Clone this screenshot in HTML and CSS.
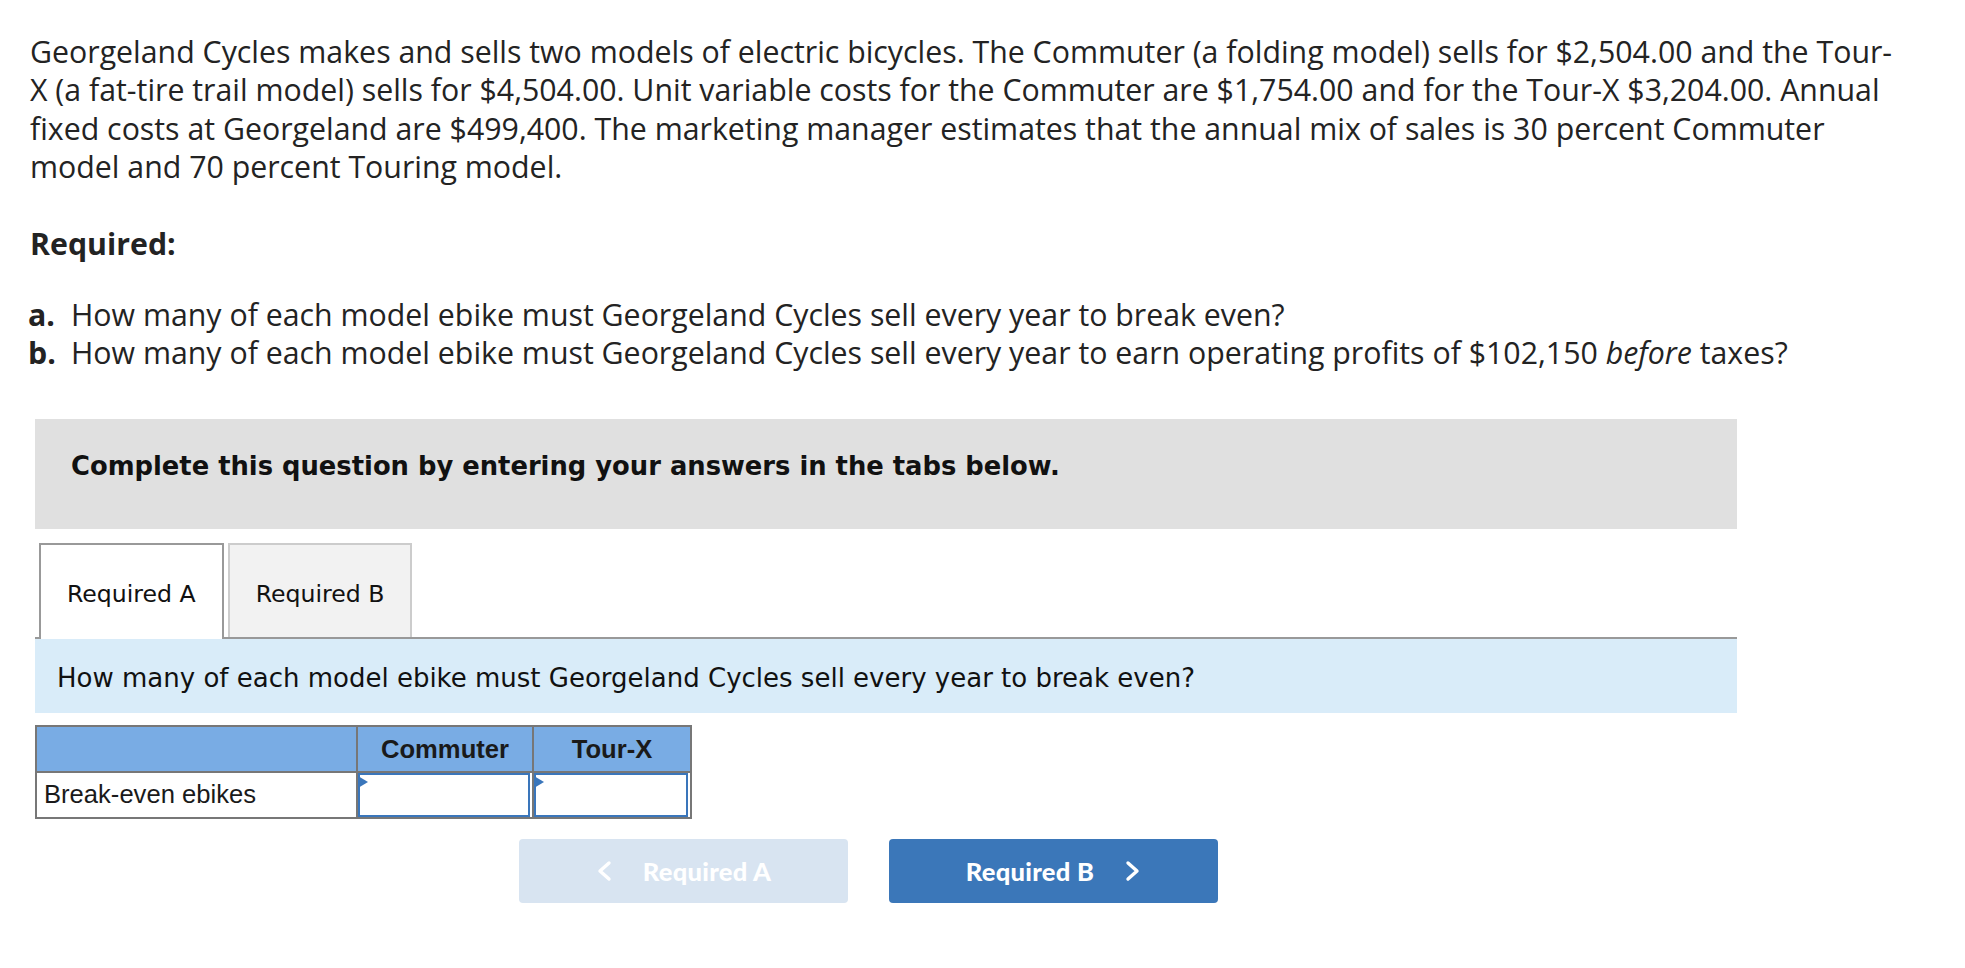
FILE: index.html
```html
<!DOCTYPE html>
<html lang="en">
<head>
<meta charset="utf-8">
<title>Georgeland Cycles</title>
<link rel="stylesheet" href="styles.css">
</head>
<body>
<div class="page">
  <p class="intro">Georgeland Cycles makes and sells two models of electric bicycles. The Commuter (a folding model) sells for $2,504.00 and the Tour-X (a fat-tire trail model) sells for $4,504.00. Unit variable costs for the Commuter are $1,754.00 and for the Tour-X $3,204.00. Annual fixed costs at Georgeland are $499,400. The marketing manager estimates that the annual mix of sales is 30 percent Commuter model and 70 percent Touring model.</p>
  <h2 class="req-title">Required:</h2>
  <ol class="req-list">
    <li><span class="marker">a.</span><span>How many of each model ebike must Georgeland Cycles sell every year to break even?</span></li>
    <li><span class="marker">b.</span><span>How many of each model ebike must Georgeland Cycles sell every year to earn operating profits of $102,150 <em>before</em> taxes?</span></li>
  </ol>
  <div class="work">
    <div class="instructions">Complete this question by entering your answers in the tabs below.</div>
    <div class="tabs">
      <div class="tab active">Required A</div>
      <div class="tab">Required B</div>
    </div>
    <div class="prompt">How many of each model ebike must Georgeland Cycles sell every year to break even?</div>
    <table class="answer">
      <thead>
        <tr><th class="c1"></th><th class="c2">Commuter</th><th class="c3">Tour-X</th></tr>
      </thead>
      <tbody>
        <tr>
          <td class="c1 label">Break-even ebikes</td>
          <td class="c2 cell"><div class="field"><input type="text" aria-label="Commuter break-even ebikes"></div></td>
          <td class="c3 cell"><div class="field"><input type="text" aria-label="Tour-X break-even ebikes"></div></td>
        </tr>
      </tbody>
    </table>
    <div class="nav">
      <button class="btn prev" type="button"><svg class="chev" viewBox="0 0 16 22" width="16" height="22"><polyline points="13,3 4,11 13,19"/></svg><span>Required A</span></button>
      <button class="btn next" type="button"><span>Required B</span><svg class="chev" viewBox="0 0 16 22" width="16" height="22"><polyline points="3,3 12,11 3,19"/></svg></button>
    </div>
  </div>
</div>
</body>
</html>
```
FILE: styles.css
```css
* { box-sizing: border-box; }
html, body { margin: 0; padding: 0; background: #fff; }
body { color: #232323; }

.page {
  padding: 33px 63px 40px 30px;
  font-family: "Open Sans", Lato, sans-serif;
  font-size: 30.3px;
  line-height: 38.4px;
}

.intro { margin: 0; }

.req-title {
  margin: 38.4px 0 0;
  font-size: 30.3px;
  font-weight: 700;
  line-height: 38.4px;
}

.req-list {
  list-style: none;
  margin: 32.6px 0 0 -2px;
  padding: 0;
}
.req-list li { display: grid; grid-template-columns: 43px 1fr; }
.req-list .marker { font-weight: 700; }
.req-list em { font-style: italic; }

.work {
  margin: 46.6px 0 0 5px;
  width: 1702px;
  font-family: "DejaVu Sans", Verdana, sans-serif;
  color: #111;
}

.instructions {
  height: 110px;
  background: #e0e0e0;
  padding: 32px 0 0 36px;
  font-weight: 700;
  font-size: 25.8px;
  line-height: 30px;
}

.tabs {
  display: flex;
  gap: 4px;
  margin-top: 14px;
  padding-left: 4px;
  border-bottom: 2px solid #999;
}
.tab {
  height: 94px;
  padding: 6px 26px 0;
  display: flex;
  align-items: center;
  border: 2px solid #ccc;
  border-bottom: 0;
  background: #f2f2f2;
  font-size: 23.6px;
  line-height: 30px;
}
.tab.active {
  background: #fff;
  border-color: #999;
  height: 96px;
  margin-bottom: -2px;
  padding-bottom: 2px;
}

.prompt {
  height: 74px;
  background: #d9ecf9;
  padding: 24px 0 0 22px;
  font-size: 26px;
  line-height: 30px;
}

.answer {
  margin-top: 12px;
  border-collapse: separate;
  border-spacing: 0;
  border: 2px solid #777;
  font-family: "Liberation Sans", Arial, sans-serif;
  font-size: 25.6px;
  color: #1a1a1a;
}
.answer th, .answer td { padding: 0; height: 44px; }
.answer th {
  height: 46px;
  background: #79ace4;
  font-weight: 700;
  text-align: center;
  border-bottom: 2px solid #777;
}
.answer .c1 { width: 321px; border-right: 2px solid #777; }
.answer .c2 { width: 176px; border-right: 2px solid #777; }
.answer .c3 { width: 156px; }
.answer .label { padding-left: 7px; padding-bottom: 2px; }

.field { position: relative; height: 44px; }
.field input {
  display: block;
  width: calc(100% - 2px);
  height: 44px;
  margin: 0;
  border: 2px solid #3a76bb;
  border-radius: 0;
  background: #fff;
  font: inherit;
  outline: none;
}
.field::after {
  content: "";
  position: absolute;
  left: 0;
  top: 3px;
  border-left: 10px solid #3a76bb;
  border-top: 6px solid transparent;
  border-bottom: 6px solid transparent;
}

.nav {
  display: flex;
  justify-content: center;
  gap: 41px;
  margin-top: 20px;
  padding-right: 35px;
}
.btn {
  width: 329px;
  height: 64px;
  border: 0;
  border-radius: 4px;
  display: flex;
  align-items: center;
  justify-content: center;
  gap: 31px;
  color: #fff;
  font-family: Lato, sans-serif;
  font-weight: 900;
  font-size: 25.5px;
  letter-spacing: 0.3px;
  cursor: pointer;
}
.btn.prev { background: #d8e4f1; }
.btn.next { background: #3b77b9; }
.chev { fill: none; stroke: #fff; stroke-width: 3.4; stroke-linecap: round; stroke-linejoin: round; }
```
